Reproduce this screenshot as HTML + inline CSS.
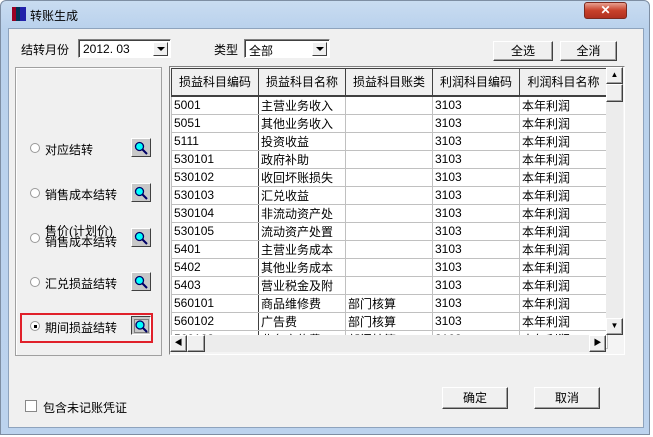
<!DOCTYPE html>
<html><head><meta charset="utf-8"><style>
*{box-sizing:border-box;margin:0;padding:0}
body{width:653px;height:437px;background:#fff;font-family:"Liberation Sans","WenQuanYi Zen Hei","Noto Sans CJK SC",sans-serif;font-size:12px;color:#000;position:relative;overflow:hidden}
.a{position:absolute}
.win{left:0;top:0;width:650px;height:435px;background:linear-gradient(#c9dcf1,#b9d1ec 28px,#bcd3ee);border:1px solid #7e8ea3;border-radius:6px 6px 0 0}
.client{left:8px;top:28px;width:636px;height:400px;background:#f0f0f0;border:1px solid #8ea3bd}
.btn{background:#f0f0f0;border:1px solid;border-color:#fff #404040 #404040 #fff;box-shadow:inset -1px -1px 0 #a0a0a0;text-align:center;font-size:12px}
.combo{background:#fff;border:1px solid;border-color:#808080 #fff #fff #808080;box-shadow:inset 1px 1px 0 #404040;height:19px;font-size:12px;padding:2px 0 0 4px}
.dd{position:absolute;right:2px;top:2px;width:15px;height:14px;background:#f0f0f0;border:1px solid;border-color:#fff #404040 #404040 #fff}
.dd:after{content:"";position:absolute;left:3px;top:4px;border:4px solid transparent;border-top:4px solid #000;border-bottom:0}
.radio{width:10px;height:10px;border-radius:50%;background:#fff;border:1px solid #999}
.mag{width:20px;height:19px;background:#c8c8c8;border:1px solid;border-color:#fff #404040 #404040 #fff}
.mag svg{position:absolute;left:2px;top:2px}
table{border-collapse:collapse;table-layout:fixed}
td{height:18px;border:1px solid #c0c0c0;font-size:12px;padding:0 2px;white-space:nowrap;overflow:hidden;background:#fff}
th{height:27px;font-weight:normal;background:#f0f0f0;border:1px solid #404040;border-bottom:2px solid #404040;font-size:12px;white-space:nowrap}
td:first-child{border-right:1px solid #404040}
</style></head><body>
<div class="a win"></div>
<div class="a" style="left:12px;top:7px;width:14px;height:14px;background:linear-gradient(90deg,#902 0,#902 4px,#035 4px,#035 8px,#22a 8px)"></div>
<div class="a" style="left:30px;top:7px;font-size:12px">转账生成</div>
<div class="a" style="left:584px;top:2px;width:43px;height:17px;border-radius:3px;background:linear-gradient(#e8a090,#c8402a 50%,#b03020);border:1px solid #7a2a20;color:#fff;text-align:center;font-weight:bold;font-size:12px;line-height:15px">✕</div>
<div class="a client"></div>

<div class="a" style="left:21px;top:41px">结转月份</div>
<div class="a combo" style="left:78px;top:39px;width:93px">2012. 03<div class="dd"></div></div>
<div class="a" style="left:214px;top:41px">类型</div>
<div class="a combo" style="left:244px;top:39px;width:86px">全部<div class="dd"></div></div>
<div class="a btn" style="left:493px;top:41px;width:60px;height:20px;line-height:18px">全选</div>
<div class="a btn" style="left:560px;top:41px;width:57px;height:20px;line-height:18px">全消</div>

<div class="a" style="left:15px;top:67px;width:147px;height:289px;border:1px solid #a0a0a0;box-shadow:inset 1px 1px 0 #fff"></div>
<div class="a radio" style="left:30px;top:143px"></div><div class="a" style="left:45px;top:141px">对应结转</div>
<div class="a mag" style="left:131px;top:138px"><svg width="15" height="14"><circle cx="5.5" cy="5.5" r="4" fill="#0ff" stroke="#006" stroke-width="1.3"/><path d="M8.5 8.5L13 13" stroke="#006" stroke-width="2"/></svg></div>
<div class="a radio" style="left:30px;top:188px"></div><div class="a" style="left:45px;top:186px">销售成本结转</div>
<div class="a mag" style="left:131px;top:183px"><svg width="15" height="14"><circle cx="5.5" cy="5.5" r="4" fill="#0ff" stroke="#006" stroke-width="1.3"/><path d="M8.5 8.5L13 13" stroke="#006" stroke-width="2"/></svg></div>
<div class="a radio" style="left:30px;top:233px"></div><div class="a" style="left:45px;top:226px;line-height:11px">售价(计划价)<br>销售成本结转</div>
<div class="a mag" style="left:131px;top:228px"><svg width="15" height="14"><circle cx="5.5" cy="5.5" r="4" fill="#0ff" stroke="#006" stroke-width="1.3"/><path d="M8.5 8.5L13 13" stroke="#006" stroke-width="2"/></svg></div>
<div class="a radio" style="left:30px;top:277px"></div><div class="a" style="left:45px;top:275px">汇兑损益结转</div>
<div class="a mag" style="left:131px;top:272px"><svg width="15" height="14"><circle cx="5.5" cy="5.5" r="4" fill="#0ff" stroke="#006" stroke-width="1.3"/><path d="M8.5 8.5L13 13" stroke="#006" stroke-width="2"/></svg></div>
<div class="a" style="left:20px;top:313px;width:133px;height:30px;border:2px solid #e0202a"></div>
<div class="a radio" style="left:30px;top:321px"></div><div class="a" style="left:34px;top:325px;width:3px;height:3px;background:#000"></div>
<div class="a" style="left:45px;top:319px">期间损益结转</div>
<div class="a mag" style="left:131px;top:316px;border-color:#404040 #fff #fff #404040"><svg width="15" height="14"><rect x=".5" y=".5" width="14" height="13" fill="none" stroke="#333" stroke-dasharray="1 1"/><circle cx="6" cy="6" r="4" fill="#0ff" stroke="#006" stroke-width="1.3"/><path d="M9 9L13 13" stroke="#006" stroke-width="2"/></svg></div>
<div class="a" style="left:25px;top:400px;width:12px;height:12px;background:#fff;border:1px solid #888"></div>
<div class="a" style="left:43px;top:399px">包含未记账凭证</div>
<div class="a btn" style="left:442px;top:387px;width:66px;height:22px;line-height:20px">确定</div>
<div class="a btn" style="left:534px;top:387px;width:66px;height:22px;line-height:20px">取消</div>

<div class="a" style="left:169px;top:66px;width:456px;height:289px;border:1px solid;border-color:#808080 #fff #fff #808080;background:#f4f4f4;overflow:hidden">
<table class="a" style="left:1px;top:1px;width:436px">
<colgroup><col style="width:87px"><col style="width:87px"><col style="width:87px"><col style="width:87px"><col style="width:88px"></colgroup>
<tr><th>损益科目编码</th><th>损益科目名称</th><th>损益科目账类</th><th>利润科目编码</th><th>利润科目名称</th></tr>
<tr><td>5001</td><td>主营业务收入</td><td></td><td>3103</td><td>本年利润</td></tr>
<tr><td>5051</td><td>其他业务收入</td><td></td><td>3103</td><td>本年利润</td></tr>
<tr><td>5111</td><td>投资收益</td><td></td><td>3103</td><td>本年利润</td></tr>
<tr><td>530101</td><td>政府补助</td><td></td><td>3103</td><td>本年利润</td></tr>
<tr><td>530102</td><td>收回坏账损失</td><td></td><td>3103</td><td>本年利润</td></tr>
<tr><td>530103</td><td>汇兑收益</td><td></td><td>3103</td><td>本年利润</td></tr>
<tr><td>530104</td><td>非流动资产处</td><td></td><td>3103</td><td>本年利润</td></tr>
<tr><td>530105</td><td>流动资产处置</td><td></td><td>3103</td><td>本年利润</td></tr>
<tr><td>5401</td><td>主营业务成本</td><td></td><td>3103</td><td>本年利润</td></tr>
<tr><td>5402</td><td>其他业务成本</td><td></td><td>3103</td><td>本年利润</td></tr>
<tr><td>5403</td><td>营业税金及附</td><td></td><td>3103</td><td>本年利润</td></tr>
<tr><td>560101</td><td>商品维修费</td><td>部门核算</td><td>3103</td><td>本年利润</td></tr>
<tr><td>560102</td><td>广告费</td><td>部门核算</td><td>3103</td><td>本年利润</td></tr>
<tr><td>560103</td><td>业务宣传费</td><td>部门核算</td><td>3103</td><td>本年利润</td></tr>
</table>
<div class="a" style="left:436px;top:0;width:17px;height:268px;background:#ececec"></div>
<div class="a btn" style="left:436px;top:0;width:17px;height:17px;font-size:8px;line-height:14px">▲</div>
<div class="a btn" style="left:436px;top:17px;width:17px;height:18px"></div>
<div class="a btn" style="left:436px;top:251px;width:17px;height:17px;font-size:8px;line-height:14px">▼</div>
<div class="a" style="left:0;top:268px;width:436px;height:17px;background:#ececec"></div>
<div class="a btn" style="left:0;top:268px;width:17px;height:17px;font-size:8px;line-height:14px">◀</div>
<div class="a btn" style="left:17px;top:268px;width:18px;height:17px"></div>
<div class="a btn" style="left:419px;top:268px;width:17px;height:17px;font-size:8px;line-height:14px">▶</div>
</div>
</body></html>
